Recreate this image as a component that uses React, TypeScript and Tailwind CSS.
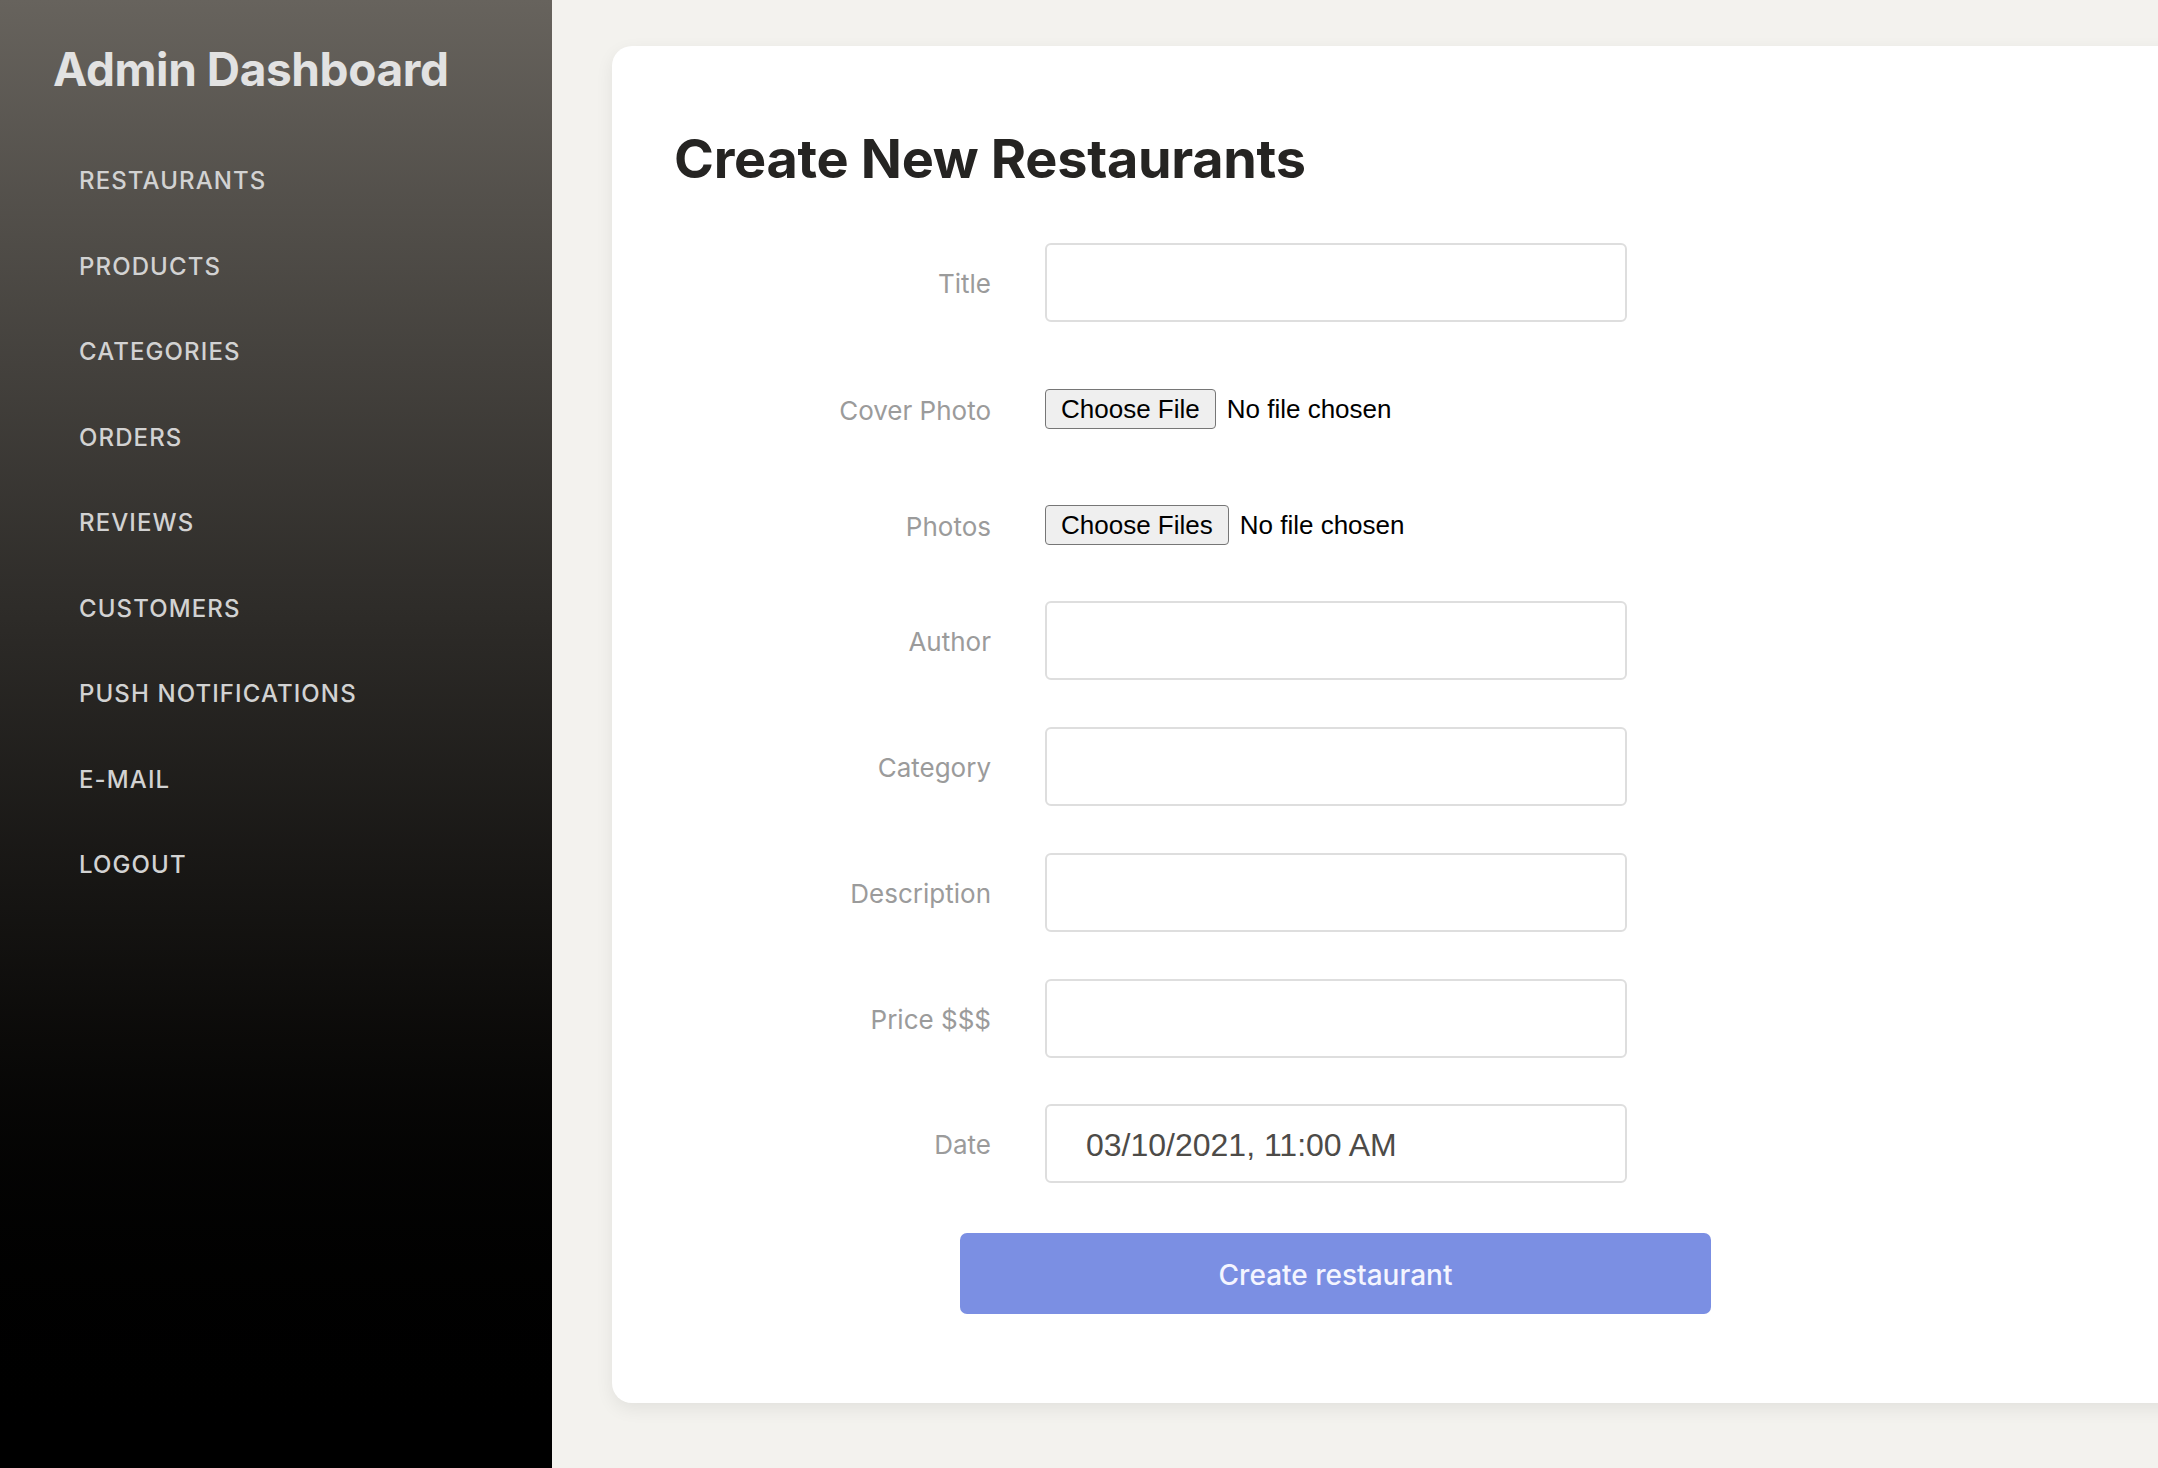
import React from "react";

const navItems = [
  "RESTAURANTS",
  "PRODUCTS",
  "CATEGORIES",
  "ORDERS",
  "REVIEWS",
  "CUSTOMERS",
  "PUSH NOTIFICATIONS",
  "E-MAIL",
  "LOGOUT",
];

function Label({ children }: { children: React.ReactNode }) {
  return (
    <div className="w-[317px] shrink-0 pt-[3px] text-right text-[26px] leading-none text-[#9b9b9b] font-['Inter',sans-serif]">
      {children}
    </div>
  );
}

function TextInput({ value }: { value?: string }) {
  return (
    <div className="ml-[54px] flex h-[79px] w-[582px] items-center rounded-[6px] border-2 border-[#dedede] bg-white pl-[39px] pt-[2px]">
      {value ? (
        <span className="font-['Liberation_Sans',Arial,sans-serif] text-[32px] leading-none text-[#4d4b48]">
          {value}
        </span>
      ) : null}
    </div>
  );
}

function FileInput({ text }: { text: string }) {
  return (
    <div className="ml-[54px] flex items-center font-['Liberation_Sans',Arial,sans-serif] text-[26px] leading-none text-black">
      <span className="flex h-[40px] items-center rounded-[4px] border border-[#767676] bg-[#efefef] px-[15px]">
        {text}
      </span>
      <span className="ml-[11px]">No file chosen</span>
    </div>
  );
}

export default function App() {
  return (
    <div className="flex h-[1468px] w-full overflow-hidden font-['Inter',sans-serif]">
      <aside className="w-[552px] shrink-0 bg-gradient-to-b from-[#67635d] to-black pl-[53px] pt-[46px]">
        <h2 className="text-[46px] font-bold leading-none tracking-[-0.4px] text-[#e2e2e2]">
          Admin Dashboard
        </h2>
        <nav className="ml-[26px] mt-[77px] flex flex-col gap-[61.5px]">
          {navItems.map((item) => (
            <a
              key={item}
              className="text-[24px] font-medium leading-[24px] tracking-[1.1px] text-[#d2d2d2]"
            >
              {item}
            </a>
          ))}
        </nav>
      </aside>
      <main className="flex-1 bg-[#f3f2ee] pl-[60px] pt-[46px]">
        <div className="w-[1700px] rounded-[20px] bg-white pb-[89px] pl-[62px] pt-[86px] shadow-[0_6px_18px_rgba(0,0,0,0.07)]">
          <h1 className="text-[54px] font-bold leading-none tracking-[-0.3px] text-[#252422]">
            Create New Restaurants
          </h1>
          <form className="flex flex-col">
            <div className="mt-[57px] flex items-center">
              <Label>Title</Label>
              <TextInput />
            </div>
            <div className="mt-[47px] flex h-[80px] items-center">
              <Label>Cover Photo</Label>
              <FileInput text="Choose File" />
            </div>
            <div className="mt-[36px] flex h-[80px] items-center">
              <Label>Photos</Label>
              <FileInput text="Choose Files" />
            </div>
            <div className="mt-[36px] flex items-center">
              <Label>Author</Label>
              <TextInput />
            </div>
            <div className="mt-[47px] flex items-center">
              <Label>Category</Label>
              <TextInput />
            </div>
            <div className="mt-[47px] flex items-center">
              <Label>Description</Label>
              <TextInput />
            </div>
            <div className="mt-[47px] flex items-center">
              <Label>Price $$$</Label>
              <TextInput />
            </div>
            <div className="mt-[46px] flex items-center">
              <Label>Date</Label>
              <TextInput value="03/10/2021, 11:00 AM" />
            </div>
            <div className="mt-[50px] pl-[286px]">
              <button
                type="button"
                className="flex h-[81px] w-[751px] items-center justify-center rounded-[7px] bg-[#7b8fe3] pt-[3px] text-[28px] font-medium leading-none text-[#f4f5ff]"
              >
                Create restaurant
              </button>
            </div>
          </form>
        </div>
      </main>
    </div>
  );
}
